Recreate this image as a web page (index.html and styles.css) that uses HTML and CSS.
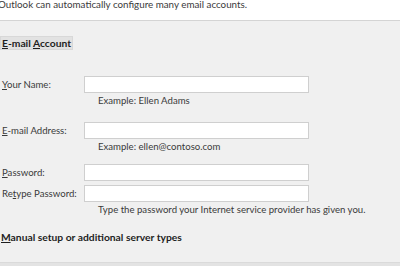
FILE: index.html
```html
<!DOCTYPE html>
<html>
<head>
<meta charset="utf-8">
<link rel="stylesheet" href="styles.css">
</head>
<body>
<div class="dialog">
  <div class="header">Outlook can automatically configure many email accounts.</div>
  <div class="content">
    <div class="section-title"><span class="focus"><u>E</u>-mail <u>A</u>ccount</span></div>
    <div class="row first"><label><u>Y</u>our Name:</label><div class="input"></div></div>
    <div class="hint">Example: Ellen Adams</div>
    <div class="row gap"><label><u>E</u>-mail Address:</label><div class="input"></div></div>
    <div class="hint">Example: ellen@contoso.com</div>
    <div class="row gap2"><label><u>P</u>assword:</label><div class="input"></div></div>
    <div class="row tight"><label>Re<u>t</u>ype Password:</label><div class="input"></div></div>
    <div class="hint">Type the password your Internet service provider has given you.</div>
    <div class="section-title manual"><u>M</u>anual setup or additional server types</div>
  </div>
  <div class="bottom"></div>
</div>
</body>
</html>
```
FILE: styles.css
```css
html, body { margin: 0; padding: 0; }
body {
  width: 400px; height: 266px; overflow: hidden;
  background: #f0f0f0;
  font-family: "Lato", "Open Sans", sans-serif;
  font-size: 9.6px;
  color: #3a3a3a;
}
u { text-decoration: underline; text-underline-offset: 1px; }
.dialog { display: flex; flex-direction: column; height: 266px; }
.header {
  background: #fff;
  height: 20px;
  border-bottom: 1px solid #d4d4d4;
  line-height: 9px;
  margin-left: -2px;
  white-space: nowrap;
  font-size: 9.8px;
}
.content { flex: 1; padding-left: 1px; }
.section-title { font-weight: 700; font-size: 10.3px; color: #1e1e1e; margin-top: 15px; height: 14px; line-height: 14px; }
.focus { background: #e2e2e2; border: 1px solid #d8d8d8; margin-left: -1px; padding: 0 1px 0 1px; display: inline-block; line-height: 12px; }
.row { display: flex; align-items: center; height: 17px; }
.row label { width: 82px; padding-left: 1px; }
.row.first { margin-top: 26px; }
.row.gap { margin-top: 14px; }
.row.gap2 { margin-top: 10px; }
.row.tight { margin-top: 4px; }
.input { width: 223px; height: 15px; background: #fff; border: 1px solid #cfcfcf; }
.hint { padding-left: 97px; height: 14px; line-height: 14px; margin-top: 1px; }
.section-title.manual { margin-top: 13px; }
.bottom { height: 3px; background: #e3e3e3; border-top: 1px solid #dadada; }
```
